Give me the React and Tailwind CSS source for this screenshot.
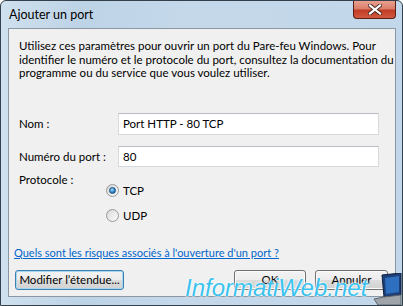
import React from "react";

// small vista-like radio button
const Radio = ({ checked, label }) => (
  <label className="flex h-[14px] items-center">
    <span className="flex h-[13px] w-[13px] items-center justify-center rounded-full border border-[#9a9a9a] bg-[linear-gradient(135deg,#d6d6d6,#fbfbfb)]">
      {checked ? (
        <span className="h-[7px] w-[7px] rounded-full border border-[#1b4f80] bg-[radial-gradient(circle_at_40%_35%,#9fe0ff,#2a7ec4_60%,#174d82)]" />
      ) : (
        <span className="h-[7px] w-[7px] rounded-full bg-[linear-gradient(135deg,#e2e2e2,#f6f6f6)]" />
      )}
    </span>
    <span className="ml-[4px]">{label}</span>
  </label>
);

const Field = ({ label, value, h }) => (
  <div className="flex items-center">
    <span className="w-[109px] shrink-0 whitespace-nowrap pl-[10px]">{label}</span>
    <div
      className={
        "flex w-[261px] items-center border border-[#d6d9de] border-t-[#b9bcc2] bg-white pl-[4px] " +
        h
      }
    >
      {value}
    </div>
  </div>
);

const Button = ({ children, w, focused }) => (
  <button
    className={
      "flex h-[20px] items-center justify-center whitespace-nowrap rounded-[3px] border bg-[linear-gradient(#f3f3f3_0%,#ececec_48%,#dcdcdc_52%,#d2d2d2_100%)] " +
      w +
      (focused
        ? " border-[#3c7fb1] shadow-[inset_0_0_0_1px_#a6d6f0]"
        : " border-[#707070] shadow-[inset_0_0_0_1px_#fbfbfb]")
    }
  >
    {children}
  </button>
);

export default function App() {
  return (
    <div className="relative flex h-[306px] w-[403px] flex-col overflow-hidden rounded-t-[6px] border border-[#34404c] bg-[linear-gradient(90deg,#cfe0ee_0%,#bdd3e6_20%,#c4d8ea_45%,#c2d7e9_100%)] pb-[8px] pl-[7px] pr-[6px] font-['Lato',sans-serif] text-[11.5px] leading-[13px] text-black">
      {/* title bar */}
      <div className="flex h-[27px] justify-between">
        <span className="self-center pl-[1px] text-[12.5px]">Ajouter un port</span>
        <div className="flex h-[18px] w-[43px] items-center justify-center rounded-b-[4px] border border-t-0 border-[#5b1e16] bg-[linear-gradient(#e9a08e_0%,#d97f6a_45%,#c23b24_55%,#cf5a40_100%)]">
          <svg width="14" height="11" viewBox="0 0 14 11">
            <path d="M2 1.5 L12 9.5 M12 1.5 L2 9.5" stroke="#4a2a24" strokeWidth="4" strokeLinecap="square" />
            <path d="M2 1.5 L12 9.5 M12 1.5 L2 9.5" stroke="#ffffff" strokeWidth="2.2" strokeLinecap="square" />
          </svg>
        </div>
      </div>

      {/* content */}
      <div className="flex flex-1 flex-col border border-[#8c97a3] bg-[#f0f0f0]">
        <p className="whitespace-nowrap pl-[10px] pt-[10px] leading-[13.5px]">
          Utilisez ces paramètres pour ouvrir un port du Pare-feu Windows. Pour
          <br />
          identifier le numéro et le protocole du port, consultez la documentation du
          <br />
          programme ou du service que vous voulez utiliser.
        </p>

        <div className="mt-[33px]">
          <Field label="Nom :" value="Port HTTP - 80 TCP" h="h-[22px]" />
        </div>
        <div className="mt-[11px]">
          <Field label="Numéro du port :" value="80" h="h-[21px]" />
        </div>

        <div className="mt-[6px] flex">
          <span className="w-[97px] shrink-0 pl-[10px]">Protocole :</span>
          <div className="flex flex-col gap-[11px] pt-[11px]">
            <Radio checked label="TCP" />
            <Radio label="UDP" />
          </div>
        </div>

        <a className="ml-[5px] mt-[23px] w-fit whitespace-nowrap text-[11px] text-[#0066cc] underline" href="#">
          Quels sont les risques associés à l'ouverture d'un port ?
        </a>

        <div className="mt-[11px] flex justify-between">
          <div className="ml-[6px]">
            <Button w="w-[109px]" focused>
              Modifier l’étendue...
            </Button>
          </div>
          <div className="mr-[7px] flex gap-[9px]">
            <Button w="w-[72px]">OK</Button>
            <Button w="w-[73px]">Annuler</Button>
          </div>
        </div>
      </div>

      {/* watermark */}
      <span className="pointer-events-none absolute left-[184px] top-[273px] font-['Liberation_Sans',sans-serif] text-[24px] italic leading-[28px] text-[#3bc2ee] [text-shadow:0_0_1px_#fff,0_0_2px_#fff,0_0_2px_#fff]">
        InformatiWeb.net
      </span>
      <svg className="pointer-events-none absolute bottom-0 right-0" width="30" height="32" viewBox="0 0 30 32">
        <path d="M10 2 L29 0 L29 22 L12 24 Z" fill="#1d3f7a" stroke="#0e1f3c" strokeWidth="1" />
        <path d="M13 5 L27 3 L27 19 L14 21 Z" fill="#2f6fbf" />
        <path d="M2 26 L12 24 L29 22 L29 32 L6 32 Z" fill="#9ea4aa" stroke="#5f666c" strokeWidth="1" />
      </svg>
    </div>
  );
}
